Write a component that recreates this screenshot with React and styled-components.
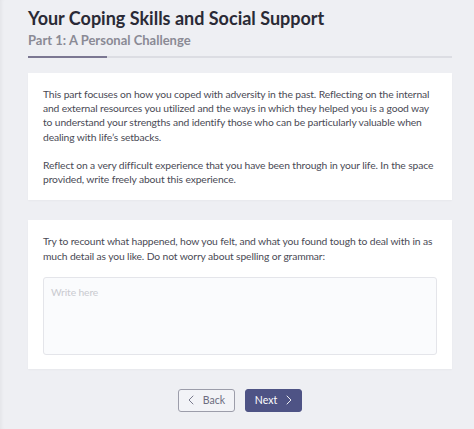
import React from "react"
import styled, { createGlobalStyle } from "styled-components"

const GlobalStyle = createGlobalStyle`
  html, body {
    margin: 0;
    padding: 0;
    background: #eeeff3;
  }
  body {
    font-family: "Lato", "Noto Sans", sans-serif;
    -webkit-font-smoothing: antialiased;
  }
`

const Page = styled.div`
  width: 474px;
  height: 429px;
  box-sizing: border-box;
  padding: 7px 22px 0 28px;
  background: #eeeff3;
  box-shadow: inset 4px 0 4px -3px rgba(0, 0, 0, 0.06);
`

const Title = styled.h1`
  margin: 0;
  font-size: 18px;
  line-height: 22px;
  font-weight: 700;
  color: #2a2a36;
`

const Subtitle = styled.h2`
  margin: 3px 0 0;
  font-size: 13px;
  line-height: 17px;
  font-weight: 700;
  color: #8a8a95;
`

const Progress = styled.div`
  display: flex;
  align-items: center;
  margin-top: 7px;
  height: 2px;
  background: #dcdde3;
`

const ProgressFill = styled.div`
  height: 2px;
  background: #7b7792;
`

const Card = styled.section`
  background: #ffffff;
  padding: 14px 15px 14px;
  margin-top: ${(props) => props.gap}px;
  box-shadow: 0 1px 2px rgba(0, 0, 0, 0.03);
`

const Paragraph = styled.p`
  margin: 0;
  font-size: 10.3px;
  letter-spacing: -0.12px;
  line-height: 14.2px;
  color: #4a4a55;
  & + & {
    margin-top: 14.2px;
  }
`

const Answer = styled.textarea`
  display: block;
  box-sizing: border-box;
  width: 100%;
  height: 78px;
  margin-top: 14px;
  padding: 7px 7px;
  resize: none;
  font-family: inherit;
  font-size: 10.3px;
  letter-spacing: -0.12px;
  line-height: 14px;
  color: #4a4a55;
  background: #fafbfd;
  border: 1px solid #e4e5ea;
  border-radius: 3px;
  outline: none;
  &::placeholder {
    color: #c9cad0;
  }
`

const Actions = styled.div`
  display: flex;
  justify-content: center;
  gap: 10px;
  margin-top: 20px;
`

const Button = styled.button`
  display: flex;
  align-items: center;
  justify-content: center;
  gap: 9px;
  width: 57px;
  height: 23px;
  padding: 0;
  font-family: inherit;
  font-size: 10.5px;
  border-radius: 3px;
  cursor: pointer;
  color: ${(props) => (props.primary ? "#ffffff" : "#6b6c80")};
  background: ${(props) => (props.primary ? "#4e5385" : "#f2f3f7")};
  border: 1px solid ${(props) => (props.primary ? "#4e5385" : "#9c9daa")};
`

const Chevron = ({ dir }) => (
  <svg width="6" height="10" viewBox="0 0 6 10" fill="none">
    <path
      d={dir === "left" ? "M5 1 L1 5 L5 9" : "M1 1 L5 5 L1 9"}
      stroke="currentColor"
      strokeWidth="0.9"
      strokeLinecap="round"
      strokeLinejoin="round"
    />
  </svg>
)

const App = () => {
  return (
    <Page>
      <GlobalStyle />
      <Title>Your Coping Skills and Social Support</Title>
      <Subtitle>Part 1: A Personal Challenge</Subtitle>
      <Progress>
        <ProgressFill style={{ width: `${(1 / 5.4) * 100}%` }} />
      </Progress>

      <Card gap={15}>
        <Paragraph>
          This part focuses on how you coped with adversity in the past.
          Reflecting on the internal and external resources you utilized and
          the ways in which they helped you is a good way to understand your
          strengths and identify those who can be particularly valuable when
          dealing with life’s setbacks.
        </Paragraph>
        <Paragraph>
          Reflect on a very difficult experience that you have been through in
          your life. In the space provided, write freely about this experience.
        </Paragraph>
      </Card>

      <Card gap={20}>
        <Paragraph>
          Try to recount what happened, how you felt, and what you found tough
          to deal with in as much detail as you like. Do not worry about
          spelling or grammar:
        </Paragraph>
        <Answer placeholder="Write here" />
      </Card>

      <Actions>
        <Button>
          <Chevron dir="left" />
          Back
        </Button>
        <Button primary>
          Next
          <Chevron dir="right" />
        </Button>
      </Actions>
    </Page>
  )
}

export default App
